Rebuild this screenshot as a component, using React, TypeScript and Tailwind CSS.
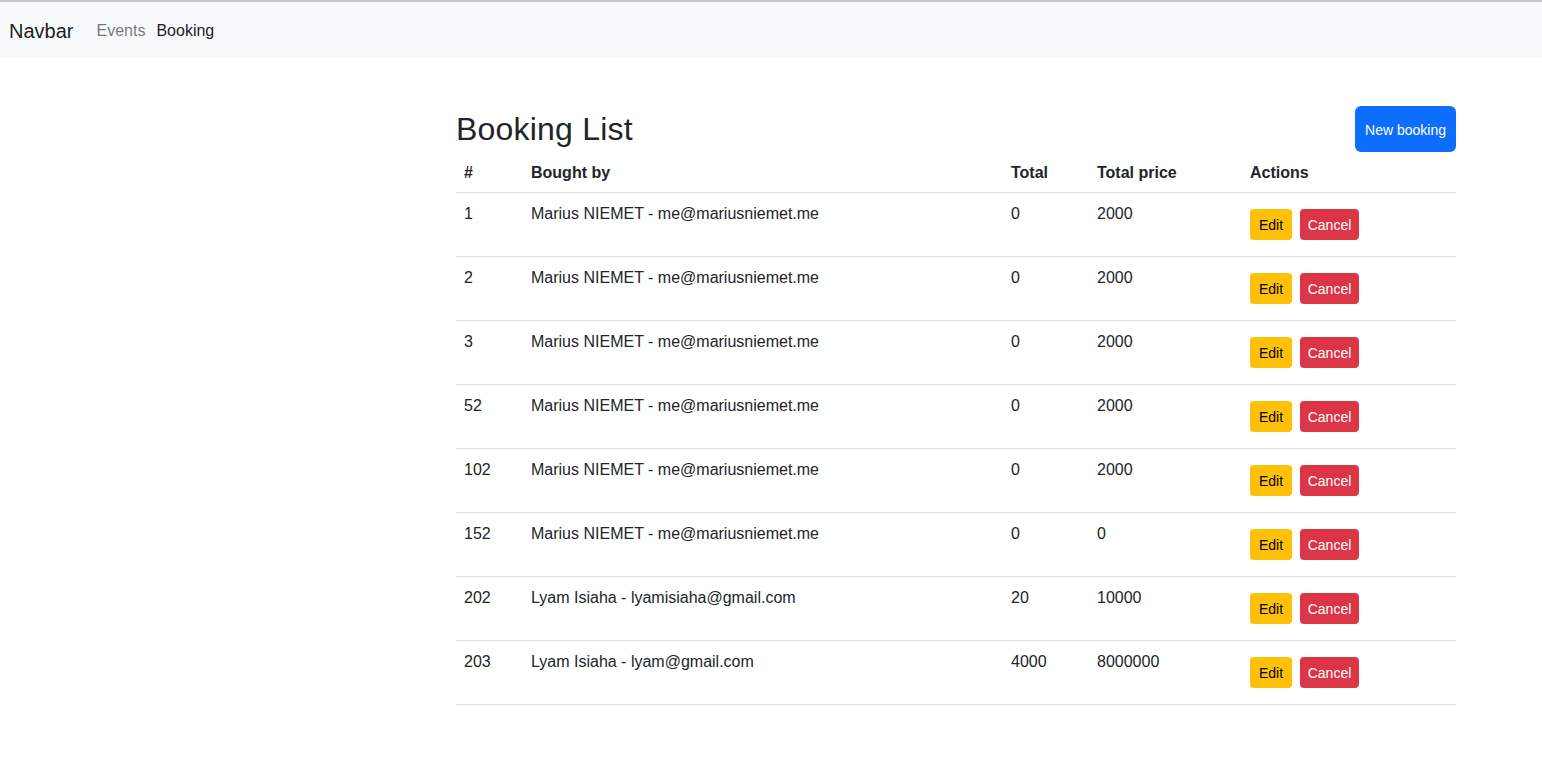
const bookings = [
  { id: 1, by: "Marius NIEMET - me@mariusniemet.me", total: "0", price: "2000" },
  { id: 2, by: "Marius NIEMET - me@mariusniemet.me", total: "0", price: "2000" },
  { id: 3, by: "Marius NIEMET - me@mariusniemet.me", total: "0", price: "2000" },
  { id: 52, by: "Marius NIEMET - me@mariusniemet.me", total: "0", price: "2000" },
  { id: 102, by: "Marius NIEMET - me@mariusniemet.me", total: "0", price: "2000" },
  { id: 152, by: "Marius NIEMET - me@mariusniemet.me", total: "0", price: "0" },
  { id: 202, by: "Lyam Isiaha - lyamisiaha@gmail.com", total: "20", price: "10000" },
  { id: 203, by: "Lyam Isiaha - lyam@gmail.com", total: "4000", price: "8000000" },
];

export default function App() {
  return (
    <div className="min-h-screen bg-white text-[#212529] font-['Liberation_Sans',sans-serif] border-t-2 border-[#c8c8c8]">
      <nav className="flex items-center h-[55px] bg-[#f8f9fa] px-[9px] pt-[2px]">
        <span className="text-[20px] text-black/90 mr-[23px]">Navbar</span>
        <a className="text-[16px] text-black/55 mr-[11px]">Events</a>
        <a className="text-[16px] text-black/90">Booking</a>
      </nav>

      <div className="ml-[456px] w-[1000px] mt-[49px]">
        <div className="flex items-center justify-between h-[46px]">
          <h2 className="text-[32px] leading-[1.2] font-normal tracking-[0.2px]">Booking List</h2>
          <button className="h-[46px] w-[101px] rounded-[6px] bg-[#0d6efd] text-white text-[14px] pt-[2px]">
            New booking
          </button>
        </div>

        <table className="w-full table-fixed border-collapse text-[16px] leading-6">
          <colgroup>
            <col className="w-[67px]" />
            <col className="w-[480px]" />
            <col className="w-[86px]" />
            <col className="w-[153px]" />
            <col />
          </colgroup>
          <thead>
            <tr className="border-b border-[#dee2e6] text-left">
              <th className="px-2 pt-[9px] pb-[7px] font-bold">#</th>
              <th className="px-2 pt-[9px] pb-[7px] font-bold">Bought by</th>
              <th className="px-2 pt-[9px] pb-[7px] font-bold">Total</th>
              <th className="px-2 pt-[9px] pb-[7px] font-bold">Total price</th>
              <th className="px-2 pt-[9px] pb-[7px] font-bold">Actions</th>
            </tr>
          </thead>
          <tbody>
            {bookings.map((b) => (
              <tr key={b.id} className="border-b border-[#dee2e6] align-top">
                <td className="px-2 pt-[9px]">{b.id}</td>
                <td className="px-2 pt-[9px]">{b.by}</td>
                <td className="px-2 pt-[9px]">{b.total}</td>
                <td className="px-2 pt-[9px]">{b.price}</td>
                <td className="p-2">
                  <div className="flex gap-2 my-2">
                    <button className="h-[31px] w-[42px] rounded-[4px] bg-[#ffc107] text-black text-[14px]">
                      Edit
                    </button>
                    <button className="h-[31px] w-[59px] rounded-[4px] bg-[#dc3545] text-white text-[14px]">
                      Cancel
                    </button>
                  </div>
                </td>
              </tr>
            ))}
          </tbody>
        </table>
      </div>
    </div>
  );
}
